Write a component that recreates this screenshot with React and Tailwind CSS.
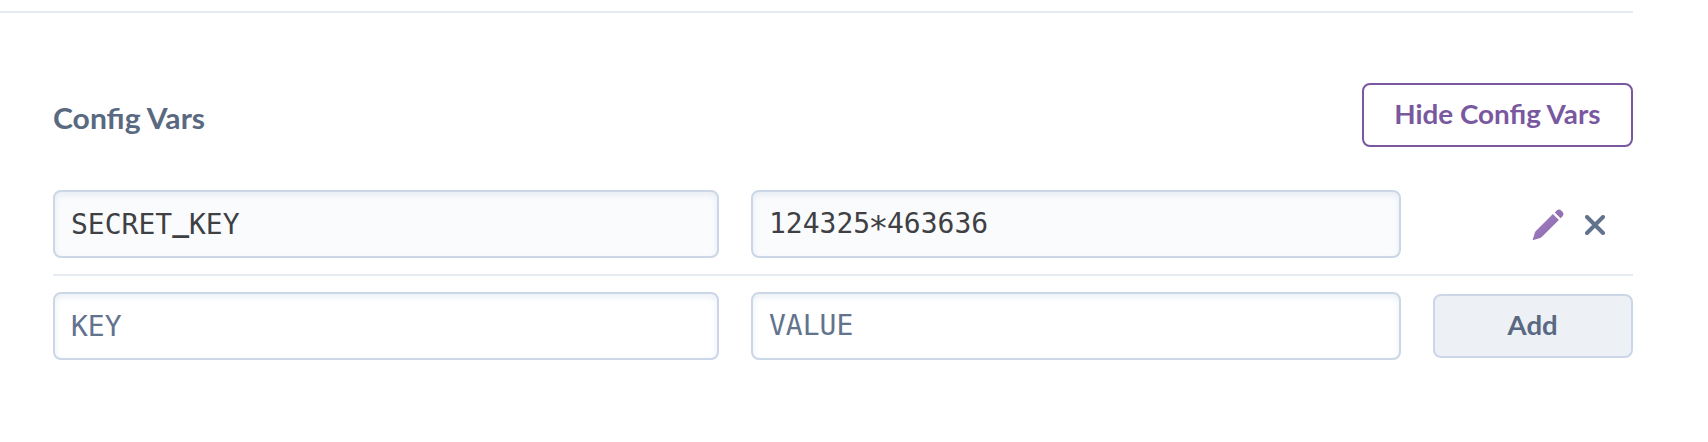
const fieldBase =
  "h-[68px] rounded-lg border-2 border-[#cbd6e6] px-4 font-['DejaVu_Sans_Mono',monospace] text-[28px] leading-[64px] shadow-[inset_0_3px_6px_rgba(203,214,230,0.4)] outline-none placeholder:text-[#62738d] placeholder:opacity-100";

function PencilIcon() {
  return (
    <svg width="32" height="32" viewBox="0 0 32 32" aria-hidden="true">
      <defs>
        <linearGradient id="pencil" x1="0" y1="0" x2="1" y2="1">
          <stop offset="0" stopColor="#a583c4" />
          <stop offset="1" stopColor="#8a66ab" />
        </linearGradient>
      </defs>
      <path
        d="M.6 31.3 2.7 24Q3.1 22.7 4.1 21.7L20.9 5 26.9 11 10.2 27.6Q9.4 28.4 8.2 28.9Z"
        fill="url(#pencil)"
      />
      <path
        d="M22.8 3.4 24.8 1.5Q27-.5 29.4 1.7L30.4 2.7Q32.5 5.1 30.5 7.3L28.6 9.2Z"
        fill="#9370b3"
      />
    </svg>
  );
}

function CloseIcon() {
  return (
    <svg width="20" height="20" viewBox="0 0 20 20" aria-hidden="true">
      <path d="M2 2 18 18M18 2 2 18" stroke="#62738d" strokeWidth="4" strokeLinecap="round" />
    </svg>
  );
}

export default function App() {
  return (
    <main className="h-[442px] overflow-hidden bg-white pt-[11px] pr-[75px] font-['Lato','Open_Sans',sans-serif]">
      <div className="h-0.5 bg-[#e7ebf0]" />
      <section className="pt-[70px] pl-[53px]">
        <header className="flex h-16 items-center justify-between">
          <h2 className="pt-1.5 text-[28px] leading-9 font-bold text-[#596981]">
            <span className="inline-block origin-left scale-x-[1.075]">Config Vars</span>
          </h2>
          <button className="flex h-16 w-[271px] items-center justify-center rounded-lg border-2 border-[#79589f] pb-0.5 text-[26px] font-bold whitespace-nowrap text-[#79589f]">
            <span className="inline-block scale-x-[1.07]">Hide Config Vars</span>
          </button>
        </header>
        <div className="mt-[43px] grid grid-cols-[666px_650px_200px] gap-x-8 border-b-2 border-[#e7ebf2] pb-4">
          <div className={`${fieldBase} bg-[#fafbfd] text-[#3f3f44]`}>
            <span className="relative top-px">SECRET<span className="relative -top-[3px] font-bold">_</span>KEY</span>
          </div>
          <div className={`${fieldBase} bg-[#fafbfd] text-[#3f3f44]`}>
            124325<span className="relative top-[5px] inline-block origin-[50%_46%] scale-120 leading-none">*</span>463636
          </div>
          <div className="flex items-center justify-end gap-5 pt-0.5 pr-[28px]">
            <button aria-label="Edit" className="mr-px"><PencilIcon /></button>
            <button aria-label="Remove"><CloseIcon /></button>
          </div>
        </div>
        <div className="grid grid-cols-[666px_650px_200px] items-center gap-x-8 pt-4">
          <input className={`${fieldBase} bg-white`} placeholder="KEY" />
          <input className={`${fieldBase} bg-white pb-0.5`} placeholder="VALUE" />
          <button className="h-16 rounded-lg border-2 border-[#cbd6e6] bg-[#edf0f5] pb-0.5 text-[26px] font-bold text-[#596981]">
            <span className="inline-block scale-x-[1.06]">Add</span>
          </button>
        </div>
      </section>
    </main>
  );
}
